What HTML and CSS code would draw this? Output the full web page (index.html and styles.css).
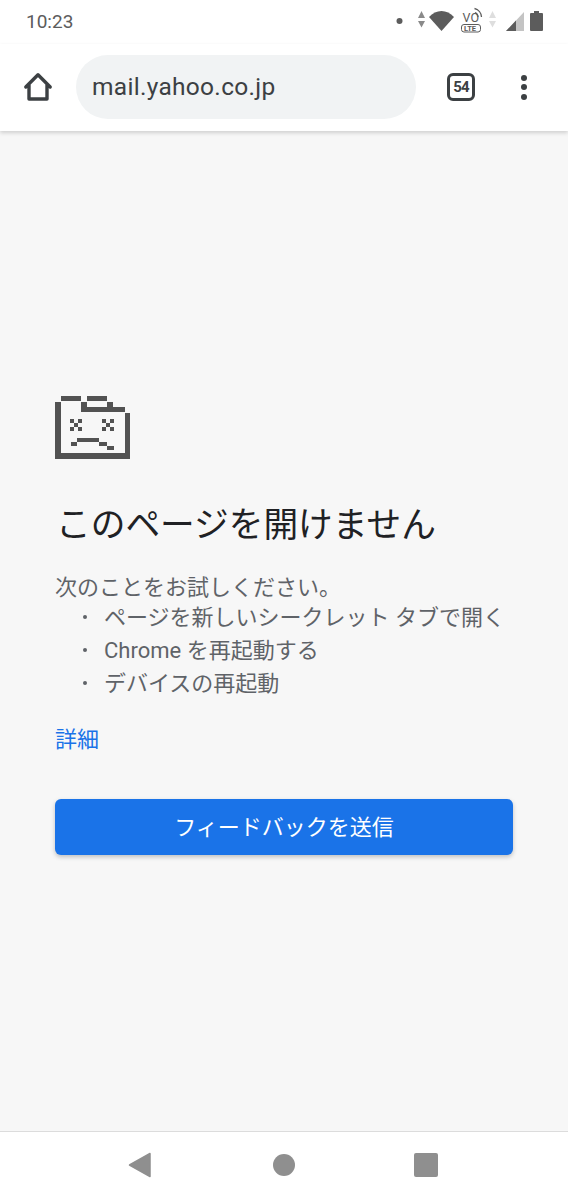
FILE: index.html
```html
<!DOCTYPE html>
<html lang="ja">
<head>
<meta charset="utf-8">
<title>mail.yahoo.co.jp</title>
<link rel="stylesheet" href="styles.css">
</head>
<body>
<div class="status">
  <span class="time">10:23</span>
  <svg class="status-icons" width="160" height="44" viewBox="390 0 160 44">
    <circle cx="399.500" cy="21" r="3" fill="#5c5c5c"/>
    <path d="M421.500 11l3.500 7h-7zM418 21h7l-3.500 6.500z" fill="#8a8a8a"/>
    <path d="M429 17c7-8 18-8 25 0l-12.500 14z" fill="#5c5c5c"/>
    <text x="462.500" y="22" class="vo">VO</text>
    <path d="M475 12.500a5 5 0 0 1 3 4.500M474.500 8.500a9 9 0 0 1 7 8.500" fill="none" stroke="#5c5c5c" stroke-width="1.300"/>
    <rect x="461.500" y="24.500" width="19" height="7.500" rx="2.500" fill="none" stroke="#5c5c5c" stroke-width="1"/>
    <text x="464" y="31" class="lte">LTE</text>
    <path d="M492.500 11l3.500 7h-7zM489 21h7l-3.500 6.500z" fill="#dedede"/>
    <path d="M506 31l18-19v19z" fill="#c4c4c4"/>
    <path d="M506 31l10-10.500V31z" fill="#5c5c5c"/>
    <path d="M534 11h5v2h3a1 1 0 0 1 1 1v16a1 1 0 0 1-1 1h-11a1 1 0 0 1-1-1V14a1 1 0 0 1 1-1h3z" fill="#5c5c5c"/>
  </svg>
</div>
<header class="toolbar">
  <svg class="home" width="30" height="30" viewBox="0 0 30 30">
    <path d="M2.800 15L15 2.800 27.200 15M6 12.500V27h18V12.500" fill="none" stroke="#3c4043" stroke-width="3.400" stroke-linejoin="round" stroke-linecap="round"/>
  </svg>
  <div class="url">mail.yahoo.co.jp</div>
  <div class="tabs">54</div>
  <div class="menu"><i></i><i></i><i></i></div>
</header>
<main class="content">
  <svg class="sad" width="76" height="64" viewBox="0 0 76 64">
    <g fill="#525252">
      <rect x="0" y="6" width="6" height="57"/>
      <rect x="0" y="57" width="75" height="6"/>
      <rect x="70" y="17" width="5" height="46"/>
      <rect x="6" y="0" width="20" height="5"/>
      <rect x="32" y="0" width="20" height="5"/>
      <rect x="26" y="6" width="6" height="10"/>
      <rect x="26" y="11" width="44" height="5"/>
      <rect x="52" y="6" width="6" height="5"/>
      <path d="M15 23h4v4h-4zM23 23h4v4h-4zM19 27h4v4h-4zM15 31h4v4h-4zM23 31h4v4h-4z"/>
      <path d="M47 23h4v4h-4zM55 23h4v4h-4zM51 27h4v4h-4zM47 31h4v4h-4zM55 31h4v4h-4z"/>
      <rect x="22" y="42" width="22" height="4"/>
      <rect x="16" y="46" width="6" height="4"/>
      <rect x="44" y="46" width="8" height="4"/>
      <rect x="52" y="50" width="7" height="4"/>
    </g>
  </svg>
  <h1 class="title">このページを開けません</h1>
  <p class="lead">次のことをお試しください。</p>
  <ul class="tips">
    <li>ページを新しいシークレット タブで開く</li>
    <li>Chrome を再起動する</li>
    <li>デバイスの再起動</li>
  </ul>
  <a class="details" href="#">詳細</a>
  <button class="feedback" type="button">フィードバックを送信</button>
</main>
<nav class="navbar">
  <svg width="24" height="26" viewBox="0 0 24 26"><path d="M22 1.500v23L1.500 13z" fill="#8f8f8f" stroke="#8f8f8f" stroke-width="1.500" stroke-linejoin="round"/></svg>
  <span class="nav-circle"></span>
  <span class="nav-square"></span>
</nav>
</body>
</html>
```
FILE: styles.css
```css
* { box-sizing: border-box; }
html, body { margin: 0; padding: 0; }
body {
  width: 568px;
  height: 1200px;
  display: flex;
  flex-direction: column;
  overflow: hidden;
  background: #fff;
  font-family: Roboto, "Noto Sans CJK JP", sans-serif;
}
.status {
  height: 44px;
  display: flex;
  align-items: center;
  padding: 0 18px 0 26px;
  flex: none;
}
.time { font-size: 19px; color: #5c5c5c; margin-bottom: 2px; }
.status-icons { margin-left: auto; display: block; }
.vo { font: 12.500px Roboto, sans-serif; fill: #5c5c5c; }
.lte { font: bold 7.500px Roboto, sans-serif; fill: #5c5c5c; }
.toolbar {
  height: 87px;
  flex: none;
  display: flex;
  align-items: center;
  background: #fff;
  position: relative;
  box-shadow: 0 2px 4px rgba(0, 0, 0, 0.16);
  z-index: 1;
  padding: 0 0 1px 23px;
}
.url {
  width: 340px;
  height: 64px;
  margin-left: 23px;
  padding-left: 16px;
  border-radius: 32px;
  background: #f1f3f4;
  color: #3c4043;
  font-size: 24.500px;
  line-height: 64px;
  letter-spacing: 0.3px;
}
.tabs {
  width: 28px;
  height: 28px;
  margin-left: 31px;
  border: 3px solid #3c4043;
  border-radius: 6px;
  color: #3c4043;
  font-size: 15px;
  font-weight: 700;
  line-height: 22px;
  letter-spacing: -0.8px;
  text-align: center;
}
.menu {
  margin-left: 46px;
  display: flex;
  flex-direction: column;
  gap: 3.500px;
}
.menu i { display: block; width: 6px; height: 6px; border-radius: 50%; background: #3c4043; }
.content {
  flex: 1;
  background: #f7f7f7;
  padding: 265px 55px 0;
  display: flex;
  flex-direction: column;
  align-items: flex-start;
}
.sad { display: block; }
.title {
  margin: 41px 0 0 1px;
  font-size: 34.700px;
  font-weight: 400;
  line-height: 48px;
  color: #202124;
}
.lead {
  margin: 25px 0 0;
  font-size: 22px;
  line-height: 27px;
  color: #5f6368;
}
.tips { margin: 0; padding: 0 0 0 49px; list-style: none; }
.tips li {
  font-size: 22px;
  line-height: 33px;
  color: #5f6368;
  position: relative;
}
.tips li::before {
  content: "";
  position: absolute;
  left: -21px;
  top: 14px;
  width: 4px;
  height: 4px;
  border-radius: 50%;
  background: #5f6368;
}
.details {
  margin-top: 23px;
  font-size: 22px;
  line-height: 33px;
  color: #1a73e8;
  text-decoration: none;
}
.feedback {
  margin-top: 43px;
  width: 458px;
  height: 56px;
  padding: 0 0 5px;
  border: 0;
  border-radius: 6px;
  background: #1a73e8;
  color: #fff;
  font: 400 22px Roboto, "Noto Sans CJK JP", sans-serif;
  box-shadow: 0 2px 4px rgba(60, 64, 67, 0.3);
}
.navbar {
  height: 69px;
  flex: none;
  display: flex;
  align-items: center;
  justify-content: center;
  background: #fff;
  border-top: 1px solid #dcdcdc;
  padding: 0 3px 2px 0;
}
.navbar svg { margin-right: 121px; }
.nav-circle { width: 22px; height: 22px; border-radius: 50%; background: #8f8f8f; }
.nav-square { width: 24px; height: 24px; border-radius: 2px; background: #8f8f8f; margin-left: 119px; }
```
